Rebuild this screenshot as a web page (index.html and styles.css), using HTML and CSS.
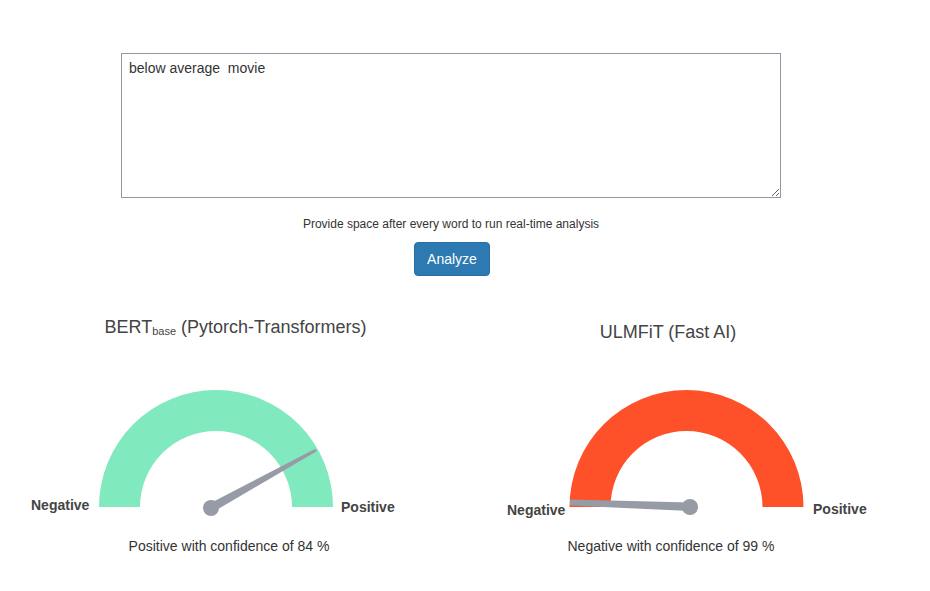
FILE: index.html
```html
<!DOCTYPE html>
<html>
<head>
<meta charset="utf-8">
<link rel="stylesheet" href="styles.css">
</head>
<body>
<div class="page">
  <div class="input-area">
    <textarea class="text-input">below average  movie</textarea>
    <p class="hint">Provide space after every word to run real-time analysis</p>
    <button class="btn">Analyze</button>
  </div>
  <div class="gauges">
    <div class="gauge-col">
      <h3 class="title title-left">BERT<sub class="sub">base</sub> (Pytorch-Transformers)</h3>
      <svg class="gauge" width="440" height="176" viewBox="0 0 440 176">
        <path d="M88 147 A117 117 0 0 1 322 147 L281 147 A76 76 0 0 0 129 147 Z" fill="#80e9bd"/>
        <polygon points="202.2,151.9 305.7,91.3 304.3,88.7 197.8,144.1" fill="#979ba6"/>
        <circle cx="200" cy="148" r="8" fill="#979ba6"/>
        <text x="20" y="150" class="lbl">Negative</text>
        <text x="330" y="152" class="lbl">Positive</text>
      </svg>
      <p class="conf conf-left">Positive with confidence of 84 %</p>
    </div>
    <div class="gauge-col">
      <h3 class="title title-right">ULMFiT (Fast AI)</h3>
      <svg class="gauge" width="440" height="176" viewBox="0 0 440 176">
        <path d="M118.5 147 A117 117 0 0 1 352.5 147 L311.5 147 A76 76 0 0 0 159.5 147 Z" fill="#fe5129"/>
        <polygon points="239,142.5 119,139.5 119,145.5 239,151" fill="#979ba6"/>
        <circle cx="239" cy="147" r="8" fill="#979ba6"/>
        <text x="56" y="155" class="lbl">Negative</text>
        <text x="362" y="154" class="lbl">Positive</text>
      </svg>
      <p class="conf">Negative with confidence of 99 %</p>
    </div>
  </div>
</div>
</body>
</html>
```
FILE: styles.css
```css
html, body {
  margin: 0;
  padding: 0;
  background: #ffffff;
}
body {
  font-family: "Liberation Sans", Arial, sans-serif;
  color: #333333;
}
.page {
  width: 880px;
  margin-left: 11px;
  padding-top: 53px;
}
.input-area {
  display: flex;
  flex-direction: column;
  align-items: center;
}
.text-input {
  box-sizing: border-box;
  width: 660px;
  height: 145px;
  margin: 0;
  padding: 5px 7px;
  border: 1px solid #8f98a4;
  border-radius: 0;
  font-family: "Liberation Sans", Arial, sans-serif;
  font-size: 14px;
  line-height: 18px;
  color: #333333;
  resize: vertical;
  outline: none;
}
.hint {
  margin: 18px 0 9px;
  font-size: 12px;
  line-height: 17px;
  color: #333333;
}
.btn {
  box-sizing: border-box;
  height: 34px;
  padding: 6px 12px;
  margin-left: 2px;
  border: 1px solid #2a6fa6;
  border-radius: 4px;
  background: #2d79b2;
  color: #ffffff;
  font-family: "Liberation Sans", Arial, sans-serif;
  font-size: 14px;
  line-height: 20px;
}
.gauges {
  display: flex;
  margin-top: 38px;
}
.gauge-col {
  width: 440px;
  display: flex;
  flex-direction: column;
  align-items: center;
}
.title {
  margin: 0 0 20px;
  font-size: 18px;
  font-weight: normal;
  line-height: 26px;
  color: #444444;
  text-align: center;
}
.title-left {
  margin-left: 9px;
}
.title-right {
  line-height: 36px;
  margin-bottom: 10px;
  margin-right: 6px;
}
.sub {
  font-size: 11px;
  line-height: 0;
  vertical-align: -2px;
}
.gauge {
  display: block;
}
.lbl {
  font-family: "Liberation Sans", Arial, sans-serif;
  font-size: 14px;
  font-weight: bold;
  fill: #444444;
}
.conf {
  margin: 0;
  font-size: 14px;
  line-height: 20px;
  color: #333333;
  text-align: center;
}
.conf-left {
  margin-right: 4px;
}
```
